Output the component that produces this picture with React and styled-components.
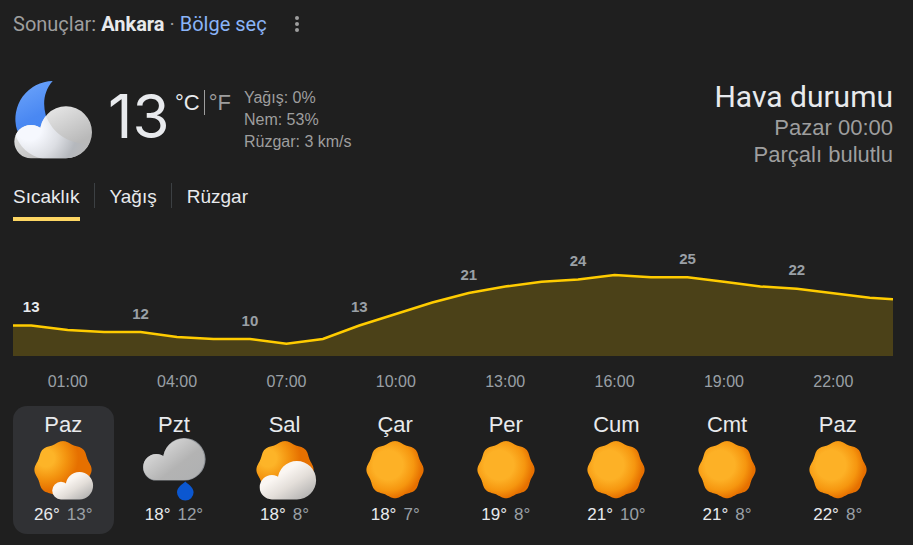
import React from "react";
import styled, { createGlobalStyle } from "styled-components";

const GlobalStyle = createGlobalStyle`
  body {
    margin: 0;
    background: #1f1f1f;
    color: #e8eaed;
    font-family: "Liberation Sans", Arial, sans-serif;
  }

  button {
    margin: 0;
    padding: 0;
    border: 0;
    background: none;
    color: inherit;
    font: inherit;
    cursor: pointer;
  }
`;

const Page = styled.main`
  padding: 0 20px 11px 13px;
`;

const LocationBar = styled.div`
  display: flex;
  align-items: center;
  height: 48px;
  font-family: Roboto, sans-serif;
  font-size: 20px;
  color: #9e9e9e;
  white-space: pre;
`;

const Place = styled.strong`
  color: #e8eaed;
`;

const RegionLink = styled.a`
  color: #8ab4f8;
  text-decoration: none;
`;

const MenuButton = styled.button`
  display: flex;
  margin-left: 18px;
`;

const Summary = styled.header`
  display: flex;
  align-items: flex-start;
  margin-top: 32px;
  height: 80px;
`;

const Temperature = styled.div`
  min-width: 67px;
  margin: 4px 0 0 15px;
  font-family: Inter, sans-serif;
  font-size: 60px;
  line-height: 64px;
`;

const Units = styled.div`
  display: flex;
  margin-top: 10px;
  font-size: 22px;
  line-height: 25px;
`;

const Unit = styled.button`
  color: ${({ $active }) => ($active ? "#e8eaed" : "#9e9e9e")};

  & + & {
    margin-left: 4px;
    padding-left: 4px;
    border-left: 1px solid #9e9e9e;
  }
`;

const Details = styled.div`
  margin: 7px 0 0 13px;
  color: #9e9e9e;
  font-size: 16px;
  line-height: 22px;
`;

const Heading = styled.div`
  margin-left: auto;
  text-align: right;
  color: #9e9e9e;
  font-size: 22px;
  line-height: 27px;
`;

const Title = styled.h1`
  margin: 0;
  color: #e8eaed;
  font-family: Roboto, sans-serif;
  font-size: 30px;
  font-weight: 400;
  line-height: 34px;
`;

const Tabs = styled.div`
  display: flex;
  margin-top: 23px;
`;

const Tab = styled.button`
  padding-bottom: 6px;
  border-bottom: 4px solid
    ${({ $active }) => ($active ? "#fdd663" : "transparent")};
  font-size: 19px;
  line-height: 28px;
`;

const Divider = styled.span`
  width: 1px;
  height: 25px;
  margin: 0 15px 0 14px;
  background: #3c4043;
`;

const Chart = styled.div`
  position: relative;
  height: 116px;
  margin-top: 19px;

  svg {
    display: block;
    width: 100%;
    height: 100%;
  }
`;

const PointLabel = styled.span`
  position: absolute;
  transform: translate(-50%, -50%);
  color: ${({ $active }) => ($active ? "#e8eaed" : "#9aa0a6")};
  font-size: 15px;
  font-weight: 700;
  line-height: 16px;
`;

const Columns = styled.div`
  display: grid;
  grid-template-columns: repeat(8, 1fr);
  padding-right: 5px;
`;

const Hours = styled(Columns)`
  padding-top: 2px;
  color: #9aa0a6;
  font-size: 16px;
  line-height: 48px;
  text-align: center;
`;

const Days = styled(Columns)`
  gap: 10px;
`;

const Day = styled.button`
  display: flex;
  flex-direction: column;
  align-items: center;
  padding: 6px 0;
  border-radius: 14px;
  background: ${({ $active }) => ($active ? "#303134" : "transparent")};
`;

const DayName = styled.span`
  font-size: 22px;
  line-height: 26px;
`;

const DayTemps = styled.span`
  display: flex;
  gap: 7px;
  font-size: 17px;
  line-height: 26px;
`;

const Low = styled.span`
  color: #9aa0a6;
`;

const CHART_WIDTH = 880;
const FIRST_X = 18.2;
const STEP_X = 36.46;

// one point for each hour, 00:00 to 23:00
const hourly = [
  85.5, 90, 92, 92, 97, 99, 99, 103.7, 99, 85.5, 74, 62.5,
  53, 46.5, 41.8, 39.5, 35, 37.2, 37.2, 41.8, 46.5, 48.8, 53.3, 57.8,
];

const pointLabels = [
  { hour: 0, value: 13, y: 67 },
  { hour: 3, value: 12, y: 74 },
  { hour: 6, value: 10, y: 81 },
  { hour: 9, value: 13, y: 67 },
  { hour: 12, value: 21, y: 35 },
  { hour: 15, value: 24, y: 21 },
  { hour: 18, value: 25, y: 19 },
  { hour: 21, value: 22, y: 30 },
];

const hours = [
  "01:00", "04:00", "07:00", "10:00", "13:00", "16:00", "19:00", "22:00",
];

const days = [
  { name: "Paz", icon: "mostlySunny", high: 26, low: 13 },
  { name: "Pzt", icon: "rain", high: 18, low: 12 },
  { name: "Sal", icon: "partlyCloudy", high: 18, low: 8 },
  { name: "Çar", icon: "sunny", high: 18, low: 7 },
  { name: "Per", icon: "sunny", high: 19, low: 8 },
  { name: "Cum", icon: "sunny", high: 21, low: 10 },
  { name: "Cmt", icon: "sunny", high: 21, low: 8 },
  { name: "Paz", icon: "sunny", high: 22, low: 8 },
];

const hourX = hour => FIRST_X + hour * STEP_X;

const circle = (cx, cy, r) =>
  `M${cx - r} ${cy}a${r} ${r} 0 1 1 ${2 * r} 0a${r} ${r} 0 1 1 ${-2 * r} 0z`;

// a big puff and a small one that share a flat base
const cloudPath = (cx, cy, r, sx, sr) => {
  const base = cy + r;
  return (
    circle(cx, cy, r) +
    circle(sx, base - sr, sr) +
    `M${sx} ${base - sr}L${cx} ${base - sr}L${cx} ${base}L${sx} ${base}z`
  );
};

const sunPath = (() => {
  const points = [];
  for (let i = 0; i < 180; i++) {
    const a = (i * Math.PI) / 90;
    const r = 27.6 + Math.cos(8 * a);
    points.push(
      `${(32 + r * Math.cos(a)).toFixed(2)} ${(31.7 + r * Math.sin(a)).toFixed(2)}`
    );
  }
  return `M${points.join("L")}z`;
})();

function IconDefs() {
  return (
    <svg width="0" height="0" style={{ position: "absolute" }} aria-hidden="true">
      <defs>
        <radialGradient id="sun" cx="0.38" cy="0.42" r="0.64">
          <stop offset="0.4" stopColor="#fdb126" />
          <stop offset="0.7" stopColor="#f6960f" />
          <stop offset="0.92" stopColor="#e67000" />
        </radialGradient>
        <radialGradient id="sunBehind" cx="0.2" cy="0.3" r="0.6">
          <stop offset="0.25" stopColor="#fdb428" />
          <stop offset="0.6" stopColor="#f3930f" />
          <stop offset="0.95" stopColor="#e67000" />
        </radialGradient>
        <linearGradient id="warmCloud" x1="0.15" y1="0.1" x2="0.9" y2="0.9">
          <stop offset="0.3" stopColor="#faf6f2" />
          <stop offset="0.6" stopColor="#e3ded9" />
          <stop offset="1" stopColor="#b4b3b2" />
        </linearGradient>
        <linearGradient id="greyCloud" x1="0.05" y1="0.2" x2="0.85" y2="0.9">
          <stop offset="0" stopColor="#e0e0e0" />
          <stop offset="0.65" stopColor="#b3b3b3" />
          <stop offset="1" stopColor="#b0b1b2" />
        </linearGradient>
        <linearGradient id="moon" x1="0.3" y1="0" x2="0.6" y2="1">
          <stop offset="0" stopColor="#6ba3fa" />
          <stop offset="0.6" stopColor="#4a88f2" />
          <stop offset="1" stopColor="#4285f4" />
        </linearGradient>
        <linearGradient id="nightCloud" x1="0.45" y1="0" x2="0.95" y2="0.6">
          <stop offset="0" stopColor="#e8e8e8" />
          <stop offset="1" stopColor="#b9b9b9" />
        </linearGradient>
        <radialGradient
          id="nightShine"
          gradientUnits="userSpaceOnUse"
          cx="16"
          cy="48"
          r="62"
        >
          <stop offset="0.2" stopColor="#f6f8fe" />
          <stop offset="0.5" stopColor="#dcdee3" />
          <stop offset="0.78" stopColor="#b5b8bd" />
          <stop offset="1" stopColor="#b9b9b9" />
        </radialGradient>
        <clipPath id="nightClip">
          <path d={cloudPath(53, 52.3, 26, 18, 16.7)} />
        </clipPath>
      </defs>
    </svg>
  );
}

function NightIcon() {
  return (
    <svg width="80" height="80" viewBox="0 0 80 80" aria-hidden="true">
      <path
        d="M39.7 1C31 11 29.5 23 32.7 35L36 60L12 62L4 50A38 38 0 0 1 39.7 1z"
        fill="url(#moon)"
      />
      <path d={cloudPath(53, 52.3, 26, 18, 16.7)} fill="url(#nightCloud)" />
      <g clipPath="url(#nightClip)">
        <path
          d="M0 30L31 30C37 52 54 64 76 64C70 73 62 79 52 79L30 79C16 76 6 66 2 54z"
          fill="url(#nightShine)"
        />
      </g>
    </svg>
  );
}

function WeatherIcon({ type }) {
  return (
    <svg width="64" height="64" viewBox="0 0 64 64" aria-hidden="true">
      {type === "sunny" && <path d={sunPath} fill="url(#sun)" />}
      {type === "mostlySunny" && (
        <>
          <path d={sunPath} fill="url(#sunBehind)" />
          <path d={cloudPath(48.4, 47.7, 13.7, 30, 8.8)} fill="url(#warmCloud)" />
        </>
      )}
      {type === "partlyCloudy" && (
        <>
          <path d={sunPath} fill="url(#sunBehind)" />
          <path d={cloudPath(43.9, 42.2, 19.2, 18.9, 12.2)} fill="url(#warmCloud)" />
        </>
      )}
      {type === "rain" && (
        <>
          <path d={cloudPath(42.3, 21.3, 21.3, 14.3, 13.3)} fill="#8d9196" />
          <path d={cloudPath(41.8, 21.3, 20.7, 14.3, 13)} fill="url(#greyCloud)" />
          <path
            d="M43.3 43.5C45.5 46 51.6 49 51.6 54.3A8.3 8.3 0 0 1 35 54.3C35 49 41 46 43.3 43.5z"
            fill="#0b57d0"
          />
        </>
      )}
    </svg>
  );
}

function TemperatureChart() {
  const points = [
    [0, hourly[0]],
    ...hourly.map((y, hour) => [hourX(hour), y]),
    [CHART_WIDTH, 59.3],
  ];
  const line = points.map(([x, y]) => `${x.toFixed(1)},${y}`).join(" ");

  return (
    <Chart>
      <svg
        viewBox={`0 0 ${CHART_WIDTH} 116`}
        preserveAspectRatio="none"
        aria-hidden="true"
      >
        <polygon
          points={`0,116 ${line} ${CHART_WIDTH},116`}
          fill="#ffcc00"
          fillOpacity="0.2"
        />
        <polyline
          points={line}
          fill="none"
          stroke="#ffcc00"
          strokeWidth="2.5"
          vectorEffect="non-scaling-stroke"
        />
      </svg>
      {pointLabels.map(({ hour, value, y }) => (
        <PointLabel
          key={hour}
          $active={hour === 0}
          style={{ left: `${(hourX(hour) / CHART_WIDTH) * 100}%`, top: y }}
        >
          {value}
        </PointLabel>
      ))}
    </Chart>
  );
}

function App() {
  const [tab, setTab] = React.useState("Sıcaklık");
  const [unit, setUnit] = React.useState("C");
  const [day, setDay] = React.useState(0);

  return (
    <Page>
      <GlobalStyle />
      <IconDefs />
      <LocationBar>
        <span>Sonuçlar: </span>
        <Place>Ankara</Place>
        <span> · </span>
        <RegionLink href="#">Bölge seç</RegionLink>
        <MenuButton aria-label="Menü">
          <svg width="24" height="24" viewBox="0 0 24 24" fill="#9e9e9e">
            <circle cx="12" cy="6" r="2" />
            <circle cx="12" cy="12" r="2" />
            <circle cx="12" cy="18" r="2" />
          </svg>
        </MenuButton>
      </LocationBar>

      <Summary>
        <NightIcon />
        <Temperature>13</Temperature>
        <Units>
          <Unit $active={unit === "C"} onClick={() => setUnit("C")}>
            °C
          </Unit>
          <Unit $active={unit === "F"} onClick={() => setUnit("F")}>
            °F
          </Unit>
        </Units>
        <Details>
          <div>Yağış: 0%</div>
          <div>Nem: 53%</div>
          <div>Rüzgar: 3 km/s</div>
        </Details>
        <Heading>
          <Title>Hava durumu</Title>
          <div>Pazar 00:00</div>
          <div>Parçalı bulutlu</div>
        </Heading>
      </Summary>

      <Tabs>
        {["Sıcaklık", "Yağış", "Rüzgar"].map((name, i) => (
          <React.Fragment key={name}>
            {i > 0 && <Divider />}
            <Tab $active={tab === name} onClick={() => setTab(name)}>
              {name}
            </Tab>
          </React.Fragment>
        ))}
      </Tabs>

      <TemperatureChart />
      <Hours>
        {hours.map(hour => (
          <span key={hour}>{hour}</span>
        ))}
      </Hours>

      <Days>
        {days.map(({ name, icon, high, low }, i) => (
          <Day key={i} $active={day === i} onClick={() => setDay(i)}>
            <DayName>{name}</DayName>
            <WeatherIcon type={icon} />
            <DayTemps>
              <span>{high}°</span>
              <Low>{low}°</Low>
            </DayTemps>
          </Day>
        ))}
      </Days>
    </Page>
  );
}

export default App;
